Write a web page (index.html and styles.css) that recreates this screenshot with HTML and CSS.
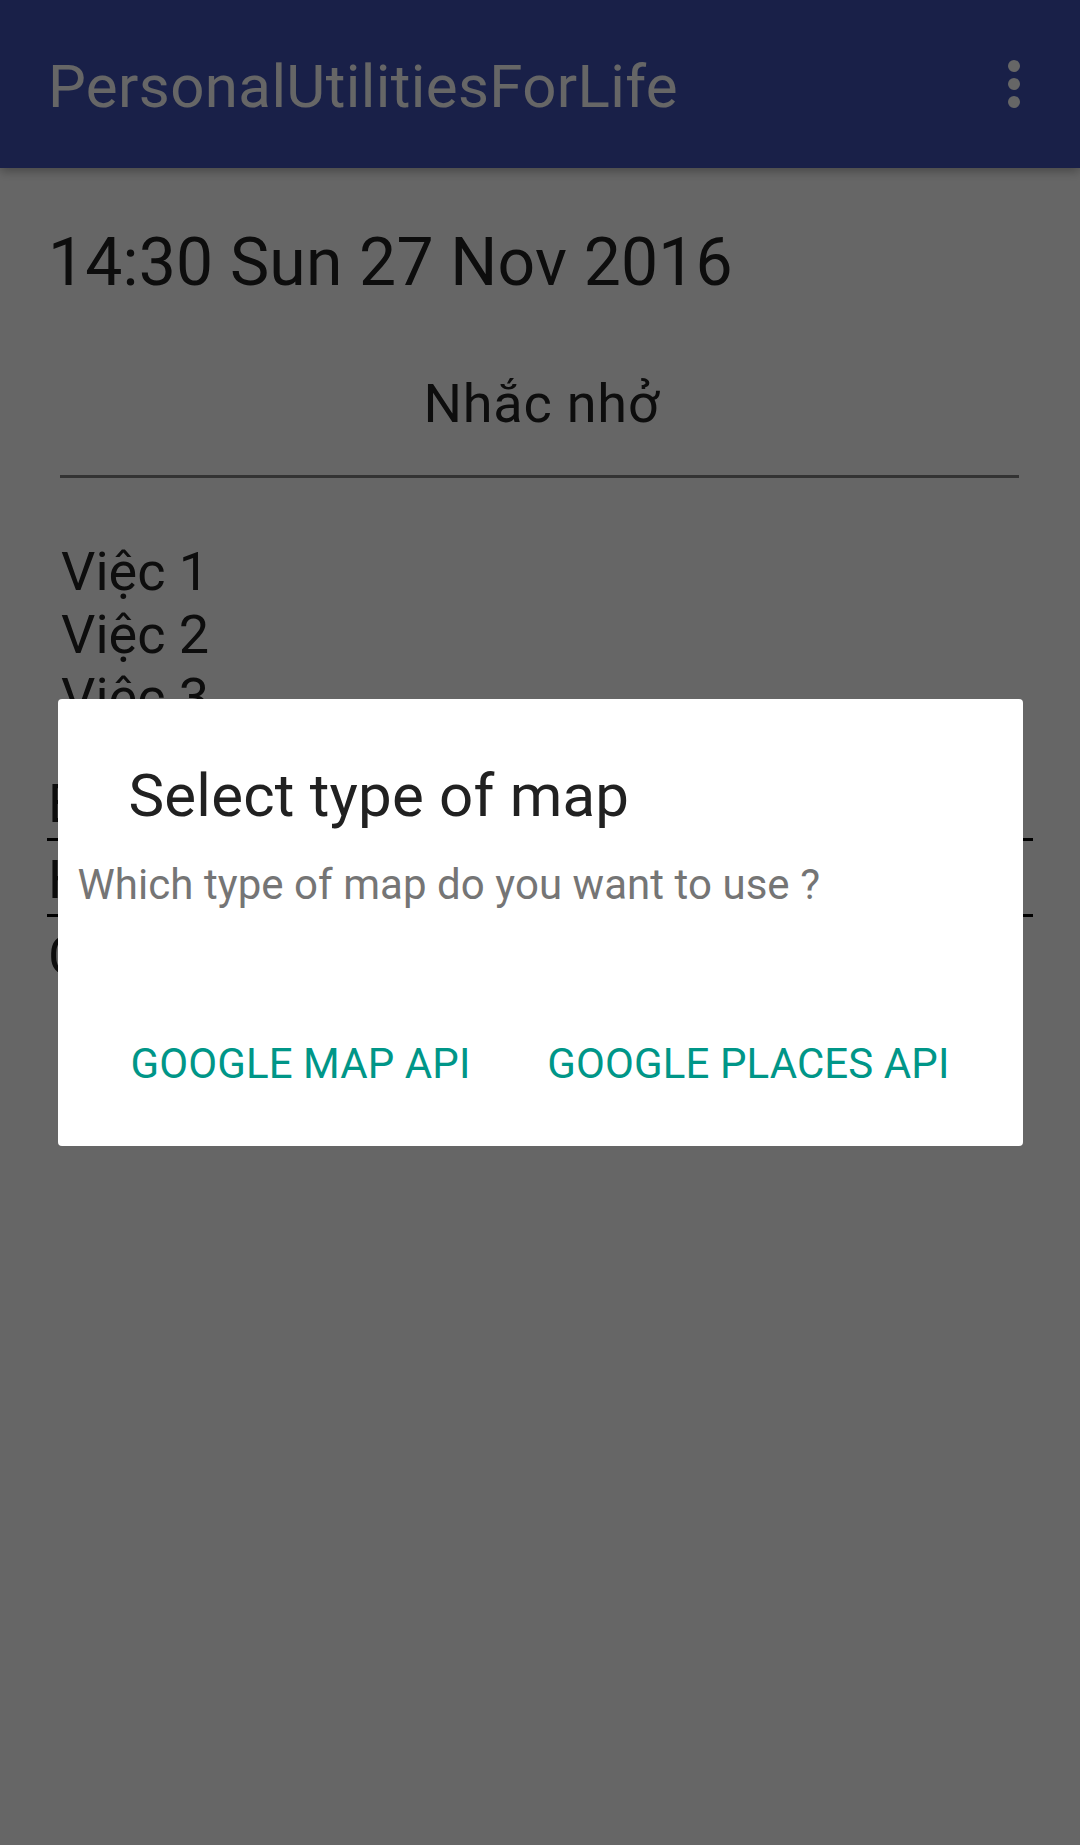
FILE: index.html
```html
<!DOCTYPE html>
<html lang="vi">
<head>
<meta charset="utf-8">
<title>PersonalUtilitiesForLife</title>
<link rel="stylesheet" href="styles.css">
</head>
<body>
<div class="screen">
  <header class="appbar">
    <div class="appbar-title">PersonalUtilitiesForLife</div>
    <div class="overflow" aria-label="More options">
      <span class="dot"></span><span class="dot"></span><span class="dot"></span>
    </div>
  </header>
  <main class="content">
    <div class="datetime">14:30 Sun 27 Nov 2016</div>
    <section class="reminders">
      <div class="reminders-title">Nhắc nhở</div>
      <div class="reminders-rule"></div>
      <div class="reminder-list">
        <div class="reminder-item">Việc 1</div>
        <div class="reminder-item">Việc 2</div>
        <div class="reminder-item">Việc 3</div>
      </div>
    </section>
    <div class="menu-rows">
      <div class="menu-row">B</div>
      <div class="menu-row">H</div>
      <div class="menu-row plain">C</div>
    </div>
  </main>
</div>
<div class="scrim">
  <div class="dialog" role="dialog">
    <div class="dialog-title">Select type of map</div>
    <div class="dialog-message">Which type of map do you want to use ?</div>
    <div class="dialog-actions">
      <span class="dialog-btn">GOOGLE MAP API</span>
      <span class="dialog-btn">GOOGLE PLACES API</span>
    </div>
  </div>
</div>
</body>
</html>
```
FILE: styles.css
```css
html, body {
  margin: 0;
  padding: 0;
}
body {
  width: 1080px;
  height: 1845px;
  background: #ffffff;
  font-family: Roboto, "Noto Sans", "Liberation Sans", sans-serif;
  overflow: hidden;
}
.screen {
  height: 1845px;
}
.appbar {
  position: relative;
  z-index: 1;
  height: 168px;
  background: #3f51b5;
  box-shadow: 0 3px 10px rgba(0, 0, 0, 0.32);
  display: flex;
  align-items: center;
  justify-content: space-between;
  padding: 0 48px 0 48px;
  box-sizing: border-box;
}
.appbar-title {
  color: #ffffff;
  font-size: 60px;
  line-height: 60px;
  padding-top: 6px;
  letter-spacing: 0.4px;
}
.overflow {
  display: flex;
  flex-direction: column;
  gap: 6px;
  margin-right: 12px;
}
.dot {
  width: 12px;
  height: 12px;
  border-radius: 50%;
  background: #ffffff;
}
.content {
  padding: 0 47px 0 47px;
  color: #212121;
}
.datetime {
  font-size: 66px;
  line-height: 66px;
  margin-top: 62px;
  padding-left: 1px;
  letter-spacing: 0.2px;
}
.reminders {
  padding: 0 14px 0 13px;
}
.reminders-title {
  font-size: 54px;
  line-height: 54px;
  text-align: center;
  margin-top: 81px;
  padding-left: 4px;
  letter-spacing: 0.8px;
}
.reminders-rule {
  height: 3px;
  background: #808080;
  margin-top: 44px;
}
.reminder-list {
  margin-top: 62px;
  padding-left: 1px;
}
.reminder-item {
  font-size: 54px;
  line-height: 63px;
}
.menu-rows {
  margin-top: 43px;
}
.menu-row {
  font-size: 54px;
  line-height: 63px;
  padding-left: 1px;
  padding-bottom: 3px;
  border-bottom: 3px solid #000000;
  margin-bottom: 7px;
}
.menu-row.plain {
  border-bottom: none;
}
.scrim {
  position: fixed;
  inset: 0;
  background: rgba(0, 0, 0, 0.6);
  display: flex;
  align-items: center;
  justify-content: center;
  z-index: 5;
}
.dialog {
  width: 965px;
  height: 447px;
  box-sizing: border-box;
  background: #ffffff;
  border-radius: 4px;
  display: flex;
  flex-direction: column;
  padding-top: 62px;
}
.dialog-title {
  font-size: 60px;
  line-height: 70px;
  color: #212121;
  padding-left: 71px;
  letter-spacing: 0.2px;
}
.dialog-message {
  font-size: 42px;
  line-height: 50px;
  color: #757575;
  margin-top: 29px;
  padding-left: 20px;
  letter-spacing: 0.05px;
}
.dialog-actions {
  margin-top: 129px;
  display: flex;
  justify-content: space-between;
  padding: 0 73px;
}
.dialog-btn {
  font-size: 42px;
  line-height: 50px;
  color: #009688;
  letter-spacing: 0.1px;
}
```
